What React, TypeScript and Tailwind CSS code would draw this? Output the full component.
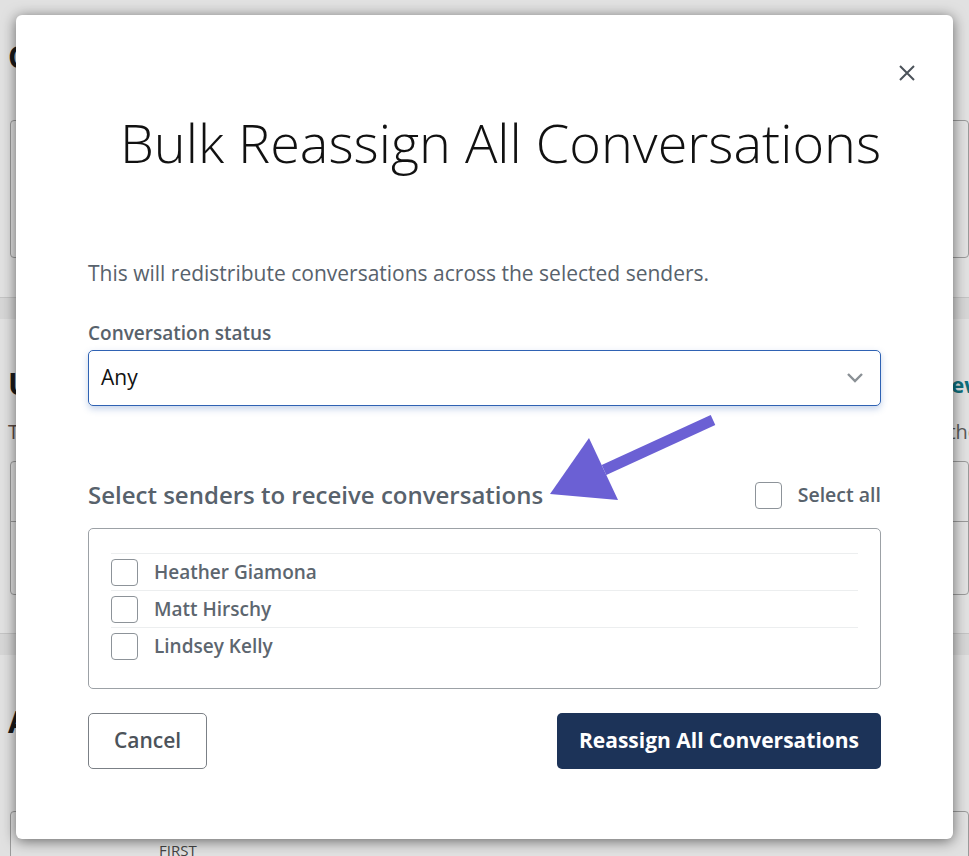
import React, { useState } from 'react';

const senders = ['Heather Giamona', 'Matt Hirschy', 'Lindsey Kelly'];

function Box({ checked, onClick }: { checked: boolean; onClick: () => void }) {
  return (
    <button
      onClick={onClick}
      className="w-[27px] h-[27px] shrink-0 rounded-[4px] border-[1.5px] border-[#8d9399] bg-white flex items-center justify-center"
    >
      {checked && (
        <svg width="16" height="16" viewBox="0 0 16 16">
          <path d="M3 8.5l3 3 7-7" fill="none" stroke="#1c3358" strokeWidth="2" />
        </svg>
      )}
    </button>
  );
}

export default function App() {
  const [picked, setPicked] = useState<string[]>([]);
  const allPicked = picked.length === senders.length;

  const toggle = (name: string) =>
    setPicked((p) => (p.includes(name) ? p.filter((n) => n !== name) : [...p, name]));

  return (
    <div className="relative w-full h-[856px] overflow-hidden bg-[#e1e1e1] font-['Open_Sans',sans-serif]">
      {/* page behind the overlay */}
      <div className="flex flex-col">
        <div className="h-[40px]" />
        <div className="pl-[8px] text-[30px] font-bold text-[#1a1a1a] leading-[34px]">Conversations</div>
        <div className="mt-[46px] ml-[10px] h-[138px] border border-[#9a9a9a] rounded-[4px]" />
        <div className="mt-[39px] h-[22px] border-t border-[#c4c4c4] bg-[#d6d6d6]" />
        <div className="mt-[48px] flex justify-between pl-[8px] pr-0">
          <span className="text-[30px] font-bold text-[#1a1a1a] leading-[34px]">Users</span>
          <span className="text-[22px] font-bold text-[#0e6f7c] leading-[34px] -mr-[14px]">View</span>
        </div>
        <div className="mt-[16px] flex justify-between pl-[8px]">
          <span className="text-[20px] text-[#5b4a44]">The</span>
          <span className="text-[20px] text-[#5b5b5b] -mr-[10px]">the</span>
        </div>
        <div className="mt-[14px] ml-[10px] h-[134px] border border-[#9a9a9a] rounded-[4px] flex flex-col">
          <div className="h-[60px] border-b border-[#9a9a9a]" />
        </div>
        <div className="mt-[38px] h-[22px] border-t border-[#c4c4c4] bg-[#d6d6d6]" />
        <div className="mt-[50px] pl-[8px] text-[30px] font-bold text-[#1a1a1a] leading-[34px]">Assignments</div>
        <div className="mt-[72px] ml-[10px] h-[60px] border border-[#9a9a9a] rounded-[4px] pl-[148px] pt-[27px] text-[15px] text-[#444]">
          FIRST
        </div>
      </div>

      {/* modal */}
      <div className="absolute left-[16px] top-[15px] w-[937px] h-[824px] bg-white rounded-[6px] shadow-[0_2px_14px_rgba(0,0,0,0.55)] flex flex-col px-[72px]">
        <div className="flex justify-end pt-[49px] -mr-[35px]">
          <button className="w-[18px] h-[18px] text-[#4c535a]">
            <svg width="18" height="18" viewBox="0 0 18 18">
              <path d="M2 2l14 14M16 2L2 16" stroke="currentColor" strokeWidth="2" />
            </svg>
          </button>
        </div>
        <h1 className="mt-[20px] pl-[32px] text-center whitespace-nowrap text-[54px] font-light text-[#111] leading-[80px]">
          Bulk Reassign All Conversations
        </h1>
        <p className="mt-[77px] text-[21px] text-[#58626c] leading-[28px]">
          This will redistribute conversations across the selected senders.
        </p>
        <label className="mt-[34px] text-[19px] font-semibold text-[#58626c] leading-[24px]">Conversation status</label>
        <div className="mt-[5px] h-[56px] border border-[#2f62b3] rounded-[5px] shadow-[0_3px_7px_rgba(47,98,179,0.28)] flex items-center justify-between pl-[12px] pr-[16px]">
          <span className="text-[21px] text-[#111]">Any</span>
          <svg width="18" height="12" viewBox="0 0 18 12">
            <path d="M2 2l7 7 7-7" fill="none" stroke="#8a9095" strokeWidth="2.4" />
          </svg>
        </div>

        <div className="mt-[74px] flex items-center justify-between">
          <h2 className="text-[24px] font-semibold text-[#58626c] leading-[30px]">Select senders to receive conversations</h2>
          <label className="flex items-center gap-[16px]">
            <Box checked={allPicked} onClick={() => setPicked(allPicked ? [] : senders)} />
            <span className="text-[19.5px] font-semibold text-[#58626c]">Select all</span>
          </label>
        </div>

        <div className="mt-[18px] h-[161px] border border-[#9ca1a6] rounded-[5px] px-[22px] pt-[24px]">
          {senders.map((name) => (
            <div key={name} className="h-[37px] border-t border-[#eceeef] flex items-center gap-[16px]">
              <Box checked={picked.includes(name)} onClick={() => toggle(name)} />
              <span className="text-[19px] font-semibold text-[#5d666f]">{name}</span>
            </div>
          ))}
        </div>

        <div className="mt-[24px] flex justify-between">
          <button className="w-[119px] h-[56px] border border-[#7b8086] rounded-[5px] text-[21px] font-semibold text-[#4c535a]">
            Cancel
          </button>
          <button className="w-[324px] h-[56px] rounded-[5px] bg-[#1c3358] text-[21px] font-bold text-white">
            Reassign All Conversations
          </button>
        </div>
      </div>

      {/* annotation arrow */}
      <svg className="absolute left-[540px] top-[405px]" width="190" height="105" viewBox="0 0 190 105">
        <line x1="64" y1="65" x2="173" y2="15" stroke="#6b60d4" strokeWidth="11" />
        <polygon points="10,89 49,33 78,95" fill="#6b60d4" />
      </svg>
    </div>
  );
}
